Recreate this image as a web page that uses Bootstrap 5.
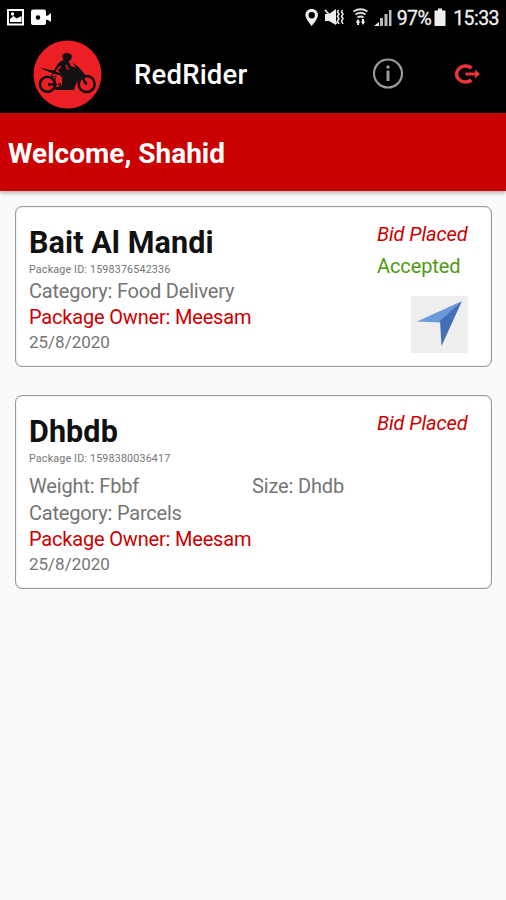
<!DOCTYPE html>
<html lang="en">
<head>
<meta charset="utf-8">
<meta name="viewport" content="width=device-width, initial-scale=1">
<title>RedRider</title>
<link href="https://cdn.jsdelivr.net/npm/bootstrap@5.3.0/dist/css/bootstrap.min.css" rel="stylesheet">
<style>
body{font-family:Roboto,sans-serif;background:#fafafa;min-height:900px;color:#757575}
.status{height:36px;padding:0 7px 0 6px;background:#000;color:#eee}
.status svg,.appbar svg,.go svg{display:block;flex:none}
.status-text{font-size:19.5px;line-height:36px;padding-top:1px;letter-spacing:-.55px;white-space:nowrap;-webkit-text-stroke:.3px #eee}
.appbar{height:77px;background:#000;padding:0 25px 0 32px}
.brand{font-size:27.5px;line-height:32px;font-weight:500;letter-spacing:.2px;color:#fff;margin-left:31px}
.welcome{height:78px;padding:4px 8px 0;background:#cb0000;color:#fff;font-size:28px;font-weight:700;box-shadow:0 2px 4px rgba(0,0,0,.3)}
.deliveries{padding:15px 14px 0 15px;display:grid;row-gap:28px}
.delivery{border:1px solid #9b9b9b;border-radius:7px;background:#fff;box-shadow:inset 0 0 1px #888;padding:16px 0 11px 13px}
.title{font-size:30.5px;line-height:40px;font-weight:700;letter-spacing:.1px;color:#111;margin:0 0 -2px}
.pid{font-size:10.7px;line-height:17px;letter-spacing:.18px}
.line{font-size:20px;line-height:26px;letter-spacing:-.2px}
.owner{font-size:20px;line-height:27px;letter-spacing:-.18px;color:#cb0000}
.date{font-size:17px;line-height:23px;padding-bottom:1px}
.specs{margin-top:6px;font-size:20px;line-height:27px;letter-spacing:-.15px}
.weight{width:223px}
.state{width:114px;font-size:20px;line-height:32px;margin-top:-5px;letter-spacing:-.1px}
.bid{color:#cb0000;font-style:italic}
.accepted{color:#4f9a10}
.go{width:57px;height:57px;background:#eee;margin:14px 0 -6px 34px;border:0;padding:0}
</style>
</head>
<body>
<header>
<div class="status d-flex align-items-center">
<svg width="48" height="36" viewBox="0 0 48 36"><rect x="2" y="10" width="15" height="14.500" fill="none" stroke="#fff" stroke-width="2"/><path d="M4 22v-3l3.500-3 3 2.500 5-2.500v6z" fill="#fff"/><circle cx="6.500" cy="14" r="1.700" fill="#fff"/><rect x="25" y="9.500" width="15" height="15.500" rx="2" fill="#fff"/><path d="M39 16l3-.5 3-2.500v9l-3-2-3-.5z" fill="#fff"/><circle cx="32" cy="17.500" r="2.300"/></svg>
<div class="d-flex align-items-center ms-auto">
<svg width="92" height="36" viewBox="305 0 92 36"><path fill="#eee" fill-rule="evenodd" d="M311.700 9c-3.700 0-6.300 2.600-6.300 6 0 4 6.300 11 6.300 11s6.300-7 6.300-11c0-3.400-2.600-6-6.300-6zm0 3a3.200 3.200 0 1 1 0 6.400 3.200 3.200 0 0 1 0-6.400z"/><path fill="#eee" d="M325 14h4l7-5v16l-7-4h-4z"/><path d="M325 10l12 13.500" stroke="#eee" stroke-width="1.800"/><path d="M338.500 10l-1 2 1.500 2-1.500 2.500 1.500 2-1.500 2.500 1.500 3M342.500 10l-1 2 1.500 2-1.500 2.500 1.500 2-1.500 2.500 1.500 3" fill="none" stroke="#eee" stroke-width="1.500"/><g fill="none" stroke="#ddd" stroke-width="1.900"><path d="M353.500 11.500q7-4.500 14 0M355.500 14.500q5-3.500 10 0M357.500 17.500q3-2 6 0"/></g><path fill="#eee" d="M355.700 22.500l2.300-3.500 2.300 3.500h-1.200v2.500h-2v-2.500zM361 21.500h1v-2.500h2v2.500h1.200l-2.100 3.500z"/><path d="M374 26l5-4v4z" fill="#eee"/><g fill="#bbb"><path d="M380 18h3v8h-3z"/><path d="M384.500 14h3v12h-3z"/><path d="M389 10h2.500v16H389z"/></g></svg>
<span class="status-text">97%</span>
<svg width="22" height="36" viewBox="0 0 22 36"><path fill="#eee" d="M7 8.500h4v2h3.500V26h-11V10.500H7z"/></svg>
<span class="status-text">15:33</span>
</div>
</div>
<nav class="appbar d-flex align-items-center" aria-label="Main">
<svg width="71" height="77" viewBox="0 0 71 77"><circle cx="35.500" cy="38.500" r="34" fill="#ec2024"/><g fill="none" stroke="#111" stroke-width="2.500"><circle cx="15.500" cy="48.300" r="7.500"/><circle cx="54.700" cy="48" r="8"/></g><path d="M16 48.500h13M54.500 48.500l-7-12" stroke="#111" stroke-width="2.500"/><path fill="#111" d="M8 32l14 2.500 7 3 5-1 4-4 6-1-3.500-5 6 4.500 9 10.500-7-.5-2.500 4-2.500 4-1.500 5H24l-2-2 8-3v-8l-8-3z"/><path fill="#111" d="M24 31l3-4.500 5-3 4 .5 3 6 4.500 1.500-.5 2-6-1-2 4.500-5 2-4.500-5-3.500 3-1-1z"/><path d="M28.500 30l-4 5.500M34 29l2 4.500M22 39l6 1-3 6 1.500 5" stroke="#ec2024" stroke-width="1.500" fill="none"/><path d="M21 37l-2 4 5-1-2 7" stroke="#111" stroke-width="1" fill="none"/><path fill="#111" d="M30 20q1-3 5-3 3.500 0 5 3l-1 4-4 1.500-3-1z"/></svg>
<span class="brand me-auto">RedRider</span>
<svg width="32" height="77" viewBox="0 0 32 77" role="img" aria-label="Info"><circle cx="15" cy="37.500" r="14" fill="none" stroke="#9a9a9a" stroke-width="2.200"/><path d="M15 34.500v10.500" stroke="#9a9a9a" stroke-width="3"/><circle cx="15" cy="31" r="1.800" fill="#9a9a9a"/></svg>
<svg class="ms-5" width="28" height="77" viewBox="1.500 0 28 77" role="img" aria-label="Log out"><path d="M20 32a9 8 0 1 0 0 12" fill="none" stroke="#ed3338" stroke-width="3.500"/><path d="M14 38h11" stroke="#ed3338" stroke-width="3"/><path d="M23.500 33.500l5 4.500-5 4.500z" fill="#ed3338"/></svg>
</nav>
<div class="welcome d-flex align-items-center position-relative">Welcome, Shahid</div>
</header>
<main class="deliveries">
<article class="delivery d-flex">
<div class="flex-grow-1">
<h2 class="title">Bait Al Mandi</h2>
<div class="pid">Package ID: 1598376542336</div>
<div class="line">Category: Food Delivery</div>
<div class="owner">Package Owner: Meesam</div>
<div class="date">25/8/2020</div>
</div>
<div class="state">
<div class="bid">Bid Placed</div>
<div class="accepted">Accepted</div>
<button class="go d-block" aria-label="Navigate"><svg width="57" height="57" viewBox="0 0 57 57"><path d="M51 5L6 25.500l23 1z" fill="#6b99d9"/><path d="M51 5L29 25l1.500 25z" fill="#4270b8"/></svg></button>
</div>
</article>
<article class="delivery d-flex">
<div class="flex-grow-1">
<h2 class="title">Dhbdb</h2>
<div class="pid">Package ID: 1598380036417</div>
<div class="specs d-flex"><div class="weight">Weight: Fbbf</div><div>Size: Dhdb</div></div>
<div class="line">Category: Parcels</div>
<div class="owner">Package Owner: Meesam</div>
<div class="date">25/8/2020</div>
</div>
<div class="state"><div class="bid">Bid Placed</div></div>
</article>
</main>
<script src="https://cdn.jsdelivr.net/npm/bootstrap@5.3.0/dist/js/bootstrap.bundle.min.js"></script>
</body>
</html>
